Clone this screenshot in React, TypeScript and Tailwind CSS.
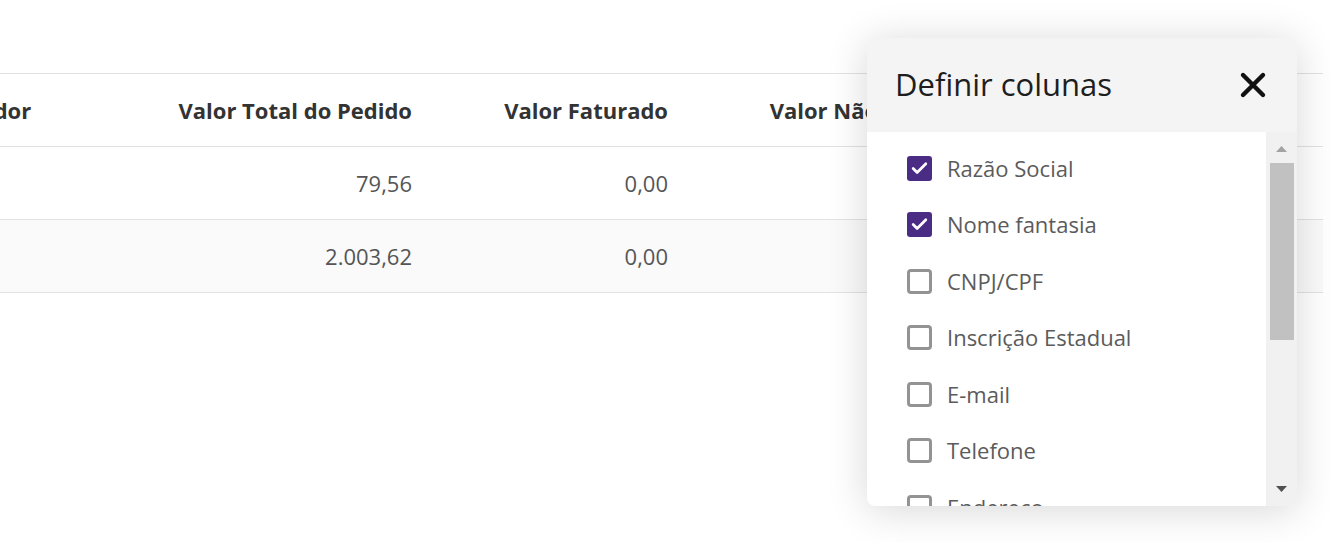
import { Check } from "lucide-react";

const columns = [
  { label: "Vendedor", width: "w-[247px]", align: "text-left" },
  { label: "Valor Total do Pedido", width: "w-[272px]", align: "text-right" },
  { label: "Valor Faturado", width: "w-[256px]", align: "text-right" },
  { label: "Valor Não Faturado", width: "w-[316px]", align: "text-right" },
];

const rows = [
  ["", "79,56", "0,00", "79,56"],
  ["", "2.003,62", "0,00", "2.003,62"],
];

const options = [
  { label: "Razão Social", checked: true },
  { label: "Nome fantasia", checked: true },
  { label: "CNPJ/CPF", checked: false },
  { label: "Inscrição Estadual", checked: false },
  { label: "E-mail", checked: false },
  { label: "Telefone", checked: false },
  { label: "Endereço", checked: false },
  { label: "Cidade", checked: false },
];

function ColumnsPanel() {
  return (
    <div className="absolute left-[867px] top-[38px] w-[430px] h-[468px] rounded-lg overflow-hidden bg-white shadow-[0_4px_40px_rgba(0,0,0,0.16)] flex flex-col">
      <div className="h-[94px] shrink-0 bg-[#f4f4f4] flex items-center justify-between pl-7 pr-[30px]">
        <h3 className="text-[31px] leading-none text-[#1e1e1e] pb-0.5">Definir colunas</h3>
        <svg width="28" height="28" viewBox="0 0 28 28" className="text-[#111]">
          <path d="M4 4 L24 24 M24 4 L4 24" stroke="currentColor" strokeWidth="4.4" strokeLinecap="round" />
        </svg>
      </div>
      <div className="flex flex-1 min-h-0">
        <ul className="flex-1 overflow-hidden pt-2 pl-10">
          {options.map((opt) => (
            <li key={opt.label} className="h-[56.5px] shrink-0 flex items-center gap-[15px]">
              {opt.checked ? (
                <span className="w-[25px] h-[25px] shrink-0 rounded-[3px] bg-[#4b2c84] flex items-center justify-center">
                  <Check size={19} strokeWidth={3.4} className="text-white" />
                </span>
              ) : (
                <span className="w-[25px] h-[25px] shrink-0 rounded-[4px] border-[3px] border-[#939393]" />
              )}
              <span className="text-[22px] text-[#5b5b5b] whitespace-nowrap">{opt.label}</span>
            </li>
          ))}
        </ul>
        <div className="w-[31px] bg-[#f1f1f1] flex flex-col items-center pt-[14px] pb-[14px]">
          <svg width="11" height="6" viewBox="0 0 11 6"><path d="M5.5 0 L11 6 L0 6 Z" fill="#a3a3a3" /></svg>
          <div className="w-[24px] h-[177px] bg-[#c1c1c1] mt-[11px]" />
          <div className="flex-1" />
          <svg width="11" height="6" viewBox="0 0 11 6"><path d="M0 0 L11 0 L5.5 6 Z" fill="#505050" /></svg>
        </div>
      </div>
    </div>
  );
}

export default function App() {
  return (
    <div className="relative w-[1330px] h-[542px] bg-white overflow-hidden" style={{ fontFamily: '"Open Sans", "Noto Sans", sans-serif' }}>
      <div className="pt-[73px] w-[1323px] overflow-hidden">
        <div className="ml-[-91px] border-t border-[#e2e2e2]">
          <div className="flex h-[73px] items-center border-b border-[#e2e2e2]">
            {columns.map((c) => (
              <div key={c.label} className={`${c.width} ${c.align} shrink-0 px-4 text-[22px] font-bold text-[#333] whitespace-nowrap`}>
                {c.label}
              </div>
            ))}
          </div>
          {rows.map((r, i) => (
            <div key={i} className={`flex h-[73px] items-center border-b border-[#e2e2e2] ${i % 2 === 1 ? "bg-[#fafafa]" : "bg-white"}`}>
              {r.map((cell, j) => (
                <div key={j} className={`${columns[j].width} ${columns[j].align} shrink-0 px-4 text-[22px] text-[#555] whitespace-nowrap`}>
                  {cell}
                </div>
              ))}
            </div>
          ))}
        </div>
      </div>
      <ColumnsPanel />
    </div>
  );
}
